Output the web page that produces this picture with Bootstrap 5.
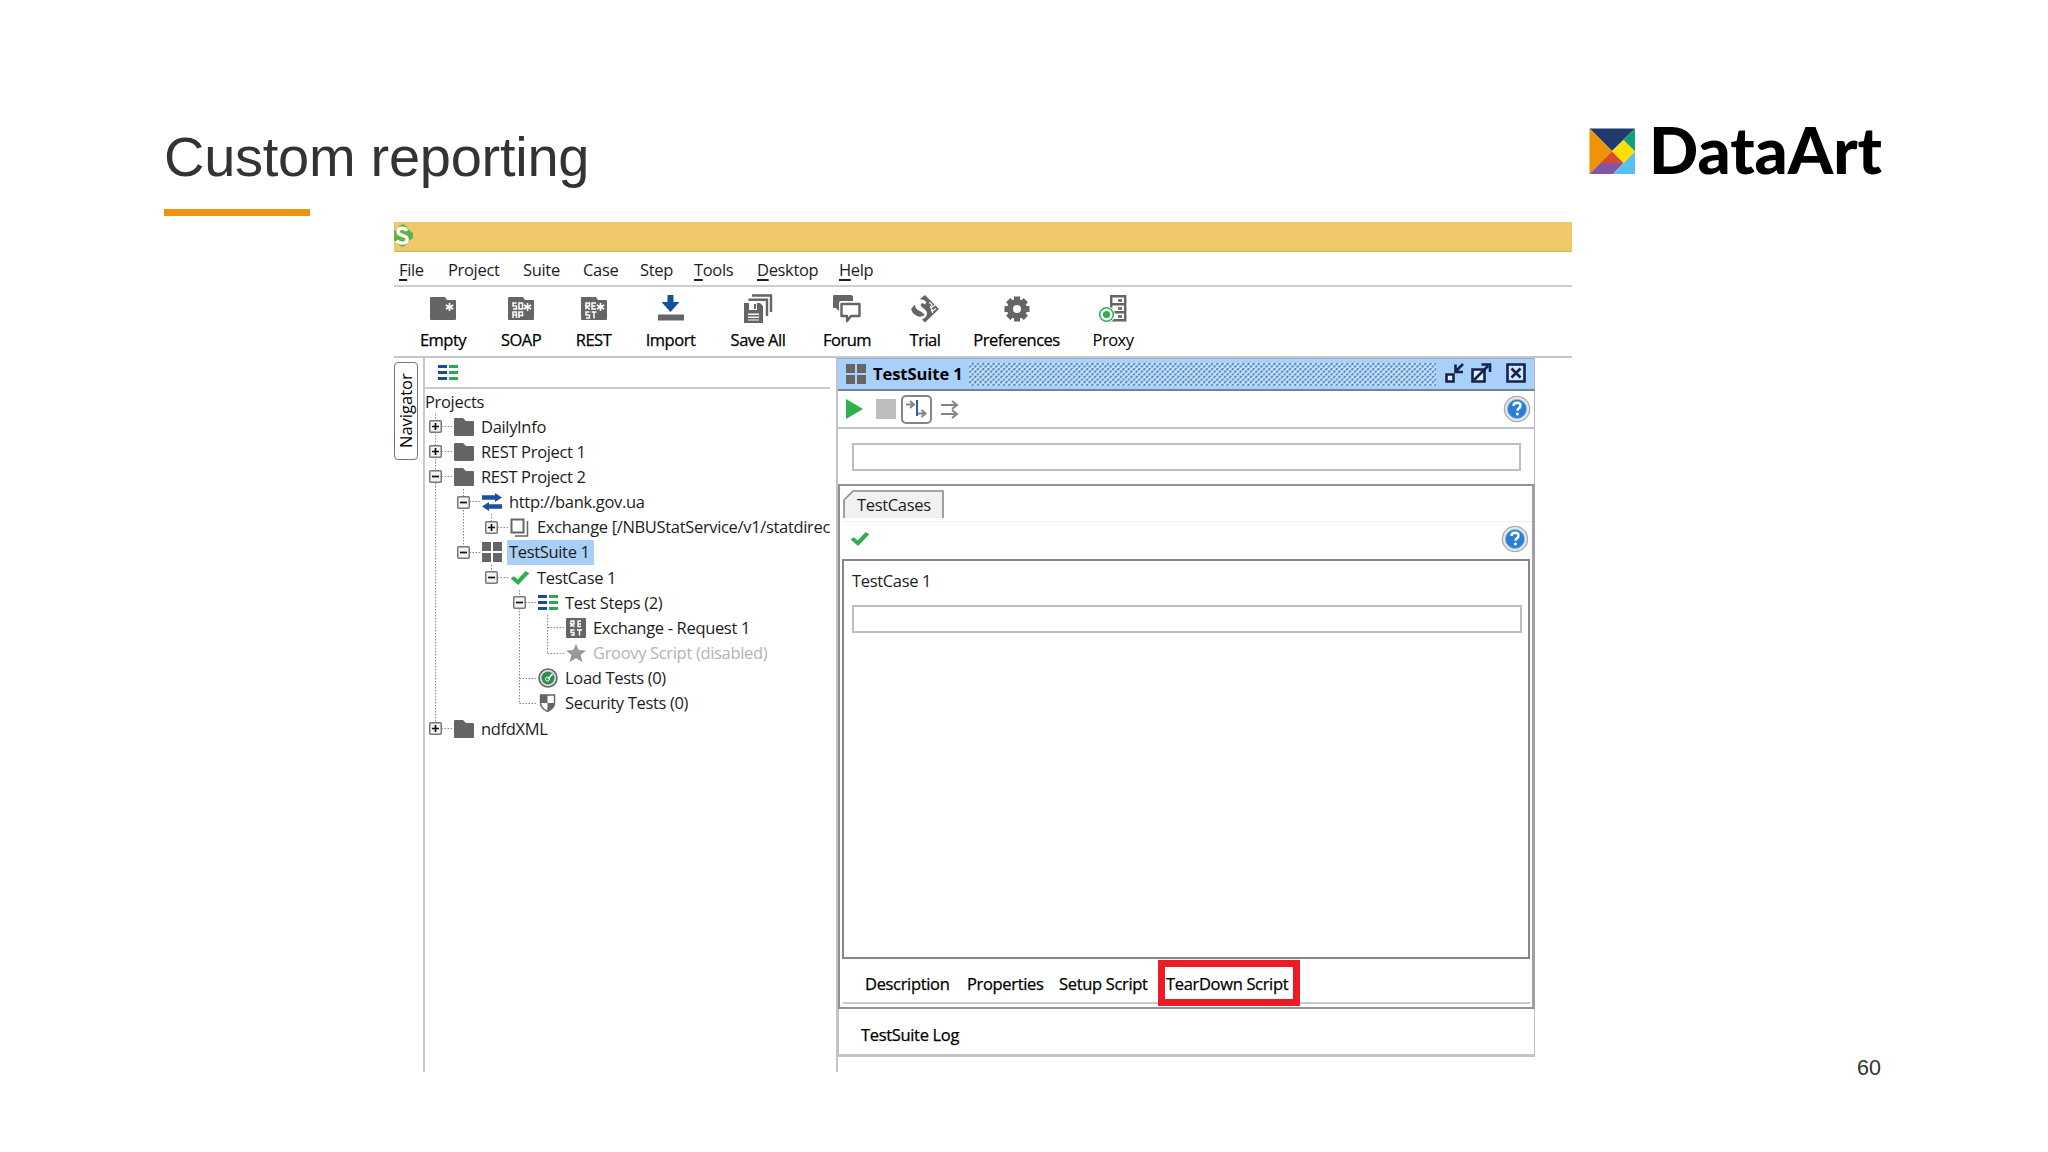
<!DOCTYPE html>
<html lang="en">
<head>
<meta charset="utf-8">
<title>Custom reporting</title>
<link href="https://cdn.jsdelivr.net/npm/bootstrap@5.3.0/dist/css/bootstrap.min.css" rel="stylesheet">
<style>
body{width:2048px;height:1152px;overflow:hidden;background:#fff;font-family:"Open Sans","Noto Sans",sans-serif;font-size:16.5px;line-height:22px;letter-spacing:-.33px;color:#1c1c22}
svg{display:block;flex:none}
.slide-head{height:222px;padding:117px 160px 0 164px}
.slide-title{font:400 56px/80px "Liberation Sans",Arial,sans-serif;letter-spacing:-.27px;color:#333;height:92px;margin:0}
.title-bar{width:146px;height:7px;background:#ee930f}
.slide-logo{margin-top:5px}
.slide-body{height:858px;padding:0 167px 0 394px}
.page-no{font:21.5px/24px "Liberation Sans",Arial,sans-serif;letter-spacing:0;color:#333}
.app{width:1178px;height:850px}
.app-caption{height:30px;background:#efc969;border-bottom:1px solid #cfb069}
.menu-strip{height:35px;border-bottom:2px solid #cfcfd1;padding-left:5px;line-height:36px}
.menu-strip u{text-underline-offset:3px;text-decoration-thickness:1.5px}
.tool-strip{height:71px;border-bottom:2px solid #c6c6c8;padding-left:10px;color:#000;letter-spacing:-.5px}
.tool-item{padding-top:7px;-webkit-text-stroke:.25px #000}
.tool-item span{margin-top:5px;white-space:nowrap}
.nav-side{width:31px;border-right:2px solid #c9c9cb;padding-top:4px}
.nav-tab{width:24px;height:98px;border:1.5px solid #77777a;border-radius:4px;writing-mode:vertical-rl;transform:rotate(180deg);line-height:21px;letter-spacing:0;text-align:center;color:#000}
.nav-panel{width:413px;height:714px;border-right:2px solid #c4c4c6}
.nav-tools{height:31px;border-bottom:2px solid #cbcbcd;margin-right:6px;padding:7px 0 0 13px}
.nav-root{height:25px;line-height:25px}
.tree-box{padding-left:1px}
.tree-row{height:25.18px;gap:7px;white-space:nowrap}
.tree-row .knob{width:13px;height:13px;margin-right:5px}
.lvl0{padding-left:3px}.lvl1{padding-left:31px}.lvl2{padding-left:59px}.lvl3{padding-left:87px}.lvl4{padding-left:115px}
.tree-sel{background:#a9cff6;height:25px;padding:1px 4px 0 2px;margin-left:-2px}
.tree-lines{left:1px;top:0;z-index:-1}
.desk{width:697px;height:698px}
.suite-caption{height:33px;background:#a9d0f8;border-bottom:2px solid #72839c;border-top:1px solid #8fb0d0;padding:0 6px 0 8px;color:#000}
.suite-caption b{margin-left:7px;letter-spacing:-.05px;font-size:16.5px}
.suite-tools{height:38px;border-bottom:2px solid #c2c2c5;padding:0 3px 0 8px}
.toggle-on{width:31px;height:29px;border:2px solid #858589;border-radius:5px;margin:0 9px 0 5px}
.frame-r{border-right:1px solid #b5b5bd}
.filter-row{height:55px;padding:14px 13px 0 14px}
.blank-field{height:28px;border:2px solid #bdbdc2}
.pane{height:525px;border:2px solid #929297;border-right-width:3px;border-right-color:#a0a0a4}
.case-tab{width:101px;height:29px;margin:4px 0 0 3px}
.case-tab span{padding:4px 0 0 14px}
.case-tools{height:38px;margin:2px 0 0 4px;padding:0 3px 3px 6px;border-top:1px solid #eee}
.case-list{height:400px;margin:0 2px 0 2px;border:2px solid #87878b;padding:9px 6px 0 8px}
.bottom-tabs{height:45px;margin:0 2px 0 3px;border-bottom:2px solid #c9c9cb;padding-left:22px;line-height:50px;color:#000;-webkit-text-stroke:.25px #000}
.hot-box{left:1158px;top:960px;width:142px;height:46px;border:7px solid #ed1b24}
.log-strip{height:48px;border:1px solid #c0c0c3;border-top:0;border-bottom:3px solid #c4c4c6;padding-left:22px;line-height:51px;color:#000;-webkit-text-stroke:.25px #000}
</style>
</head>
<body>
<svg width="0" height="0" class="position-absolute">
<defs>
<symbol id="folder" viewBox="0 0 20 18"><path d="M1 0h8l3 3h7q1 0 1 1v13q0 1-1 1H1q-1 0-1-1V1q0-1 1-1z" fill="#656466"/></symbol>
<symbol id="plus" viewBox="0 0 13 13"><rect x=".75" y=".75" width="11.5" height="11.5" rx="1" fill="#f3f3f3" stroke="#77777a" stroke-width="1.5"/><path d="M3 6.5h7M6.5 3v7" stroke="#111" stroke-width="1.7"/></symbol>
<symbol id="minus" viewBox="0 0 13 13"><rect x=".75" y=".75" width="11.5" height="11.5" rx="1" fill="#f3f3f3" stroke="#77777a" stroke-width="1.5"/><path d="M3 6.5h7" stroke="#111" stroke-width="1.7"/></symbol>
<symbol id="steps" viewBox="0 0 20 15"><path d="M0 1.500h9M0 7.500h9M0 13.500h9" stroke="#1d4c96" stroke-width="3"/><path d="M11 1.500h9M11 7.500h9M11 13.500h9" stroke="#2fa852" stroke-width="3"/></symbol>
<symbol id="grid4" viewBox="0 0 20 20"><path d="M0 0h9v9H0zM11 0h9v9h-9zM0 11h9v9H0zM11 11h9v9h-9z" fill="#656466"/></symbol>
<symbol id="tick" viewBox="0 0 20 15"><path d="M0 8l3.500-2.500 4 3.500L16 0l4 2.500L8 15z" fill="#2fae50"/></symbol>
<symbol id="help" viewBox="0 0 28 28"><circle cx="14" cy="14" r="12.600" fill="#e8e8e8" stroke="#aaa" stroke-width="1.300"/><circle cx="14" cy="14" r="9.600" fill="#2a7fd4" stroke="#8ab8e4"/><path d="M10.500 11q0-3.200 3.700-3.200 3.300 0 3.300 2.800 0 1.700-1.700 2.800-1.300.800-1.300 2.300" fill="none" stroke="#fff" stroke-width="2.500"/><circle cx="14.400" cy="19" r="1.500" fill="#fff"/></symbol>
<symbol id="filebox" viewBox="0 0 26 23"><path d="M1 0h14l2 3h8q1 0 1 1v18q0 1-1 1H1q-1 0-1-1V1q0-1 1-1z" fill="#656466"/><path d="M19.500 6v8M15.800 8l7.400 4M15.800 12l7.400-4" stroke="#fff" stroke-width="1.700"/></symbol>
</defs>
</svg>
<header class="slide-head d-flex justify-content-between align-items-start">
<div><h1 class="slide-title">Custom reporting</h1><div class="title-bar"></div></div>
<svg class="slide-logo" width="300" height="60" viewBox="1588 122 300 60">
<path d="M1589.500 128.500H1635L1612 151z" fill="#213a6d"/><path d="M1589.500 128.500l23 23-23 22.500z" fill="#f09306"/><path d="M1635 128.500v23l-11.500-11.500z" fill="#0fa37c"/><path d="M1623.500 140l11.500 11.500-11.500 11.500-11.500-11.500z" fill="#fbe000"/><path d="M1612 151.500l11.500 11.500h-23z" fill="#dc4a2e"/><path d="M1600.500 163h23l-10.500 11h-23.500z" fill="#8257a2"/><path d="M1635 151.500V174h-22z" fill="#58c0ea"/>
<text x="1649" y="174" textLength="233" lengthAdjust="spacingAndGlyphs" font-family="Lato" font-weight="900" font-size="64" letter-spacing="0">DataArt</text>
</svg>
</header>
<main class="slide-body d-flex justify-content-between align-items-end">
<section class="app align-self-start">
<div class="app-caption"><svg width="22" height="28" viewBox="0 0 22 28"><path d="M0 9q4-2 5-5l4-2 3 2q2 4 7 7v5q-5 3-7 7l-3 2-4-2q-1-3-5-5z" fill="#62b346"/><path d="M12.800 8.800Q11.500 6.300 8 6.300q-4 0-4 3.200 0 2.800 4.300 3.800 4.900 1.200 4.900 4.200 0 3.600-5 3.600Q4.500 21.100 3 18.500" fill="none" stroke="#fff" stroke-width="3.400"/></svg></div>
<nav class="menu-strip d-flex">
<div style="width:49px"><u>F</u>ile</div><div style="width:75px">Project</div><div style="width:60px">Suite</div><div style="width:57px">Case</div><div style="width:54px">Step</div><div style="width:63px"><u>T</u>ools</div><div style="width:82px"><u>D</u>esktop</div><div><u>H</u>elp</div>
</nav>
<div class="tool-strip d-flex">
<div class="tool-item d-flex flex-column align-items-center" style="width:78px"><svg width="30" height="30" viewBox="0 0 30 30"><use href="#filebox" x="2" y="3" width="26" height="23"/></svg><span>Empty</span></div>
<div class="tool-item d-flex flex-column align-items-center" style="width:78px"><svg width="30" height="30" viewBox="0 0 30 30"><use href="#filebox" x="2" y="3" width="26" height="23"/><g fill="none" stroke="#fff" stroke-width="1.500"><path d="M10.500 9H7v3h3.500v3H7M13 9h3.500v6H13zM7 24v-6h3.500v6M7 21h3.500M13 24v-6h3.500v3.500H13"/></g></svg><span>SOAP</span></div>
<div class="tool-item d-flex flex-column align-items-center" style="width:67px"><svg width="30" height="30" viewBox="0 0 30 30"><use href="#filebox" x="2" y="3" width="26" height="23"/><g fill="none" stroke="#fff" stroke-width="1.500"><path d="M7 15.500V9h3.500v3H7l3.800 3.500M17 9h-4v6h4M13 12h3.500M10.500 18H7v3h3.500v3H7M12.500 18h5M15 18v6.500"/></g></svg><span>REST</span></div>
<div class="tool-item d-flex flex-column align-items-center" style="width:87px"><svg width="30" height="30" viewBox="0 0 30 30"><path d="M11.500 1h6v7h6L14.500 18 5.500 8h6z" fill="#15509f"/><path d="M2 20.500h26v6H2z" fill="#656466"/></svg><span>Import</span></div>
<div class="tool-item d-flex flex-column align-items-center" style="width:88px"><svg width="30" height="30" viewBox="0 0 30 30"><g fill="none" stroke="#656466" stroke-width="2.400"><path d="M9 1.500h19V18M5.500 5.800H24V22"/></g><path d="M1 9h16l3 3v17H1z" fill="#656466"/><path d="M6 9h8v7H6zM5 19.500h11v7H5z" fill="#fff"/><path d="M11 10h2v5h-2zM5 21h11v1.500H5zM5 24h11v1.500H5z" fill="#656466"/></svg><span>Save All</span></div>
<div class="tool-item d-flex flex-column align-items-center" style="width:90px"><svg width="30" height="30" viewBox="0 0 30 30"><path d="M2 1h17q2 0 2 2v4H9q-2 0-2 2v8l-3-3H2q-1 0-1-1V2q0-1 1-1z" fill="#656466"/><path d="M9.500 10h18v12H19l-4 5v-5H9.500z" fill="#fff" stroke="#656466" stroke-width="2.400" stroke-linejoin="round"/></svg><span>Forum</span></div>
<div class="tool-item d-flex flex-column align-items-center" style="width:66px"><svg width="30" height="30" viewBox="0 0 30 30"><path d="M9.500 5.500L15 1l14 14-14 13.500-3-3q5-2.500 5-6 0-3-4-5.500-3-2-2-4 1-1.500 4 .500l1.500-2.500Q13 4.500 9.500 5.500z" fill="#656466"/><path d="M1 15l4-4.500q0 4.500 4.500 6.500 4 1.500 5 4.500Q9 24 5.500 21 2 19 1 15z" fill="#656466"/><path d="M19 8.500l3 2-2 3M25 11l-4 3 2 3 3-2.500M21 16l2 3" fill="none" stroke="#fff" stroke-width="1.100"/></svg><span>Trial</span></div>
<div class="tool-item d-flex flex-column align-items-center" style="width:117px"><svg width="30" height="30" viewBox="-15 -15 30 30"><g fill="#656466"><circle r="10"/><path id="cog" d="M-3-12.500h6v25h-6z"/><use href="#cog" transform="rotate(45)"/><use href="#cog" transform="rotate(90)"/><use href="#cog" transform="rotate(135)"/></g><circle r="4" fill="#fff"/></svg><span>Preferences</span></div>
<div class="tool-item d-flex flex-column align-items-center" style="width:76px;-webkit-text-stroke:0"><svg width="30" height="30" viewBox="0 0 30 30"><g fill="#fff" stroke="#656466" stroke-width="2.400"><path d="M13.200 2.200h14v8h-14zM13.200 10.200h14v8h-14zM13.200 18.200h14v8h-14z"/><path d="M20 6.500h4M20 14.500h4M20 22.500h4"/></g><circle cx="8.500" cy="20.500" r="8.500" fill="#fff"/><circle cx="8.500" cy="20.500" r="6.800" fill="#fff" stroke="#35b257" stroke-width="1.600"/><circle cx="8.500" cy="20.500" r="3.600" fill="#2fae50"/></svg><span>Proxy</span></div>
</div>
<div class="d-flex">
<div class="nav-side"><div class="nav-tab">Navigator</div></div>
<div class="nav-panel">
<div class="nav-tools"><svg width="20" height="15"><use href="#steps"/></svg></div>
<div class="nav-root">Projects</div>
<div class="tree-box position-relative z-0">
<svg class="tree-lines position-absolute" width="300" height="330" fill="none" stroke="#8a8a8e" stroke-dasharray="1.500 1.500"><path d="M9.500 0v310M37.500 75V138M65.500 100v10M65.500 151v10M93.500 176v113M121.500 201v38M9.500 12.500h18M9.500 37.500h18M9.500 62.500h18M37.500 87.500h18M65.500 113.500h18M37.500 138.500h18M65.500 163.500h18M93.500 188.500h18M121.500 213.500h18M121.500 239.500h18M93.500 264.500h18M93.500 289.500h18M9.500 314.500h18"/></svg>
<div class="tree-row lvl0 d-flex align-items-center"><svg class="knob"><use href="#plus"/></svg><svg width="20" height="18"><use href="#folder"/></svg><span>DailyInfo</span></div>
<div class="tree-row lvl0 d-flex align-items-center"><svg class="knob"><use href="#plus"/></svg><svg width="20" height="18"><use href="#folder"/></svg><span>REST Project 1</span></div>
<div class="tree-row lvl0 d-flex align-items-center"><svg class="knob"><use href="#minus"/></svg><svg width="20" height="18"><use href="#folder"/></svg><span>REST Project 2</span></div>
<div class="tree-row lvl1 d-flex align-items-center"><svg class="knob"><use href="#minus"/></svg><svg width="20" height="18" viewBox="0 0 20 18"><path d="M0 2.300h13V0l7 4.500L13 9V6.700H0zM20 11.300H7V9l-7 4.500L7 18v-2.300h13z" fill="#1d4f9f"/></svg><span>http://bank.gov.ua</span></div>
<div class="tree-row lvl2 d-flex align-items-center"><svg class="knob"><use href="#plus"/></svg><svg width="20" height="19" viewBox="0 0 20 19"><path d="M1.500 1.500h12v13h-12z" fill="#fff" stroke="#656466" stroke-width="2"/><path d="M17.500 3v15H5" fill="none" stroke="#656466" stroke-width="1.500"/></svg><span>Exchange [/NBUStatService/v1/statdirec</span></div>
<div class="tree-row lvl1 d-flex align-items-center"><svg class="knob"><use href="#minus"/></svg><svg width="20" height="20"><use href="#grid4"/></svg><span class="tree-sel">TestSuite 1</span></div>
<div class="tree-row lvl2 d-flex align-items-center"><svg class="knob"><use href="#minus"/></svg><svg width="20" height="14"><use href="#tick"/></svg><span>TestCase 1</span></div>
<div class="tree-row lvl3 d-flex align-items-center"><svg class="knob"><use href="#minus"/></svg><svg width="20" height="15"><use href="#steps"/></svg><span>Test Steps (2)</span></div>
<div class="tree-row lvl4 d-flex align-items-center"><svg class="knob"></svg><svg width="20" height="20" viewBox="0 0 20 20"><rect width="20" height="20" rx="1" fill="#656466"/><path d="M5 9V3h3v3H5l3.500 3M15 3h-3v5.500h3M12 6h3M8.500 12H5v2.500h3V17H5M11 12h5M13.500 12v5.500" fill="none" stroke="#fff" stroke-width="1.400"/></svg><span>Exchange - Request 1</span></div>
<div class="tree-row lvl4 d-flex align-items-center"><svg class="knob"></svg><svg width="20" height="18" viewBox="0 0 20 18"><path d="M10 0l2.700 6 7.300.500-5.500 4.500 2 7L10 14.200 3.500 18l2-7L0 6.500 7.300 6z" fill="#98989b"/></svg><span style="color:#b4b4b6">Groovy Script (disabled)</span></div>
<div class="tree-row lvl3 d-flex align-items-center"><svg class="knob"></svg><svg width="20" height="20" viewBox="0 0 20 20"><circle cx="10" cy="10" r="9" fill="#ddd" stroke="#656466" stroke-width="1.600"/><circle cx="10" cy="10" r="6.500" fill="#2c8f50"/><path d="M10 11l4.500-5" stroke="#fff" stroke-width="1.800"/><circle cx="9.500" cy="11" r="2" fill="none" stroke="#fff"/></svg><span>Load Tests (0)</span></div>
<div class="tree-row lvl3 d-flex align-items-center"><svg class="knob"></svg><svg width="20" height="18" viewBox="0 0 20 18"><path d="M2.500 1h14v8q0 5-7 8.500-7-3.500-7-8.500z" fill="#fff" stroke="#656466" stroke-width="1.400"/><path d="M2 1h7.500v8H2zM9.500 9h7q0 5-7 8.500z" fill="#656466"/></svg><span>Security Tests (0)</span></div>
<div class="tree-row lvl0 d-flex align-items-center"><svg class="knob"><use href="#plus"/></svg><svg width="20" height="18"><use href="#folder"/></svg><span>ndfdXML</span></div>
</div>
</div>
<div class="desk">
<div class="suite-caption frame-r d-flex align-items-center"><svg width="20" height="20"><use href="#grid4"/></svg><b>TestSuite 1</b>
<svg class="ms-auto" width="467" height="23"><defs><pattern id="hatch" width="5.200" height="5.200" patternUnits="userSpaceOnUse"><path d="M.400 4.200L2 2.600M3 1.600L4.600 0" stroke="#3f72a4" stroke-width="1.300"/><path d="M3 4.800l1.600-1.600M.400 1.600L2 0" stroke="#dff0ff" stroke-width="1.200"/></pattern></defs><rect width="467" height="23" fill="url(#hatch)"/></svg>
<svg width="86" height="24" viewBox="0 0 86 24" style="margin-left:6px" fill="none" stroke="#152348" stroke-width="2.600"><path d="M4.500 12.500h7v7h-7z" fill="#dff0ff"/><path d="M21 2l-7 7M13.500 2.500V10H21"/><path d="M30.500 7.500h12v12h-12z" fill="#dff0ff"/><path d="M32 18L46 4M39.500 2.500H48V10"/><path d="M65.500 2.500h17v17h-17z" fill="#cfe6fc"/><path d="M69.500 6.500l9 9M78.500 6.500l-9 9"/></svg></div>
<div class="suite-tools frame-r d-flex align-items-center"><svg width="17" height="20"><path d="M0 0l17 10L0 20z" fill="#2bb24c"/></svg><svg width="20" height="20" style="margin-left:13px"><rect width="20" height="20" fill="#bdbcbe"/></svg>
<div class="toggle-on d-flex align-items-center justify-content-center"><svg width="22" height="18" viewBox="0 0 22 18" fill="none" stroke="#858589" stroke-width="2"><path d="M0 4.500h8M4 1l4 3.500L4 8M11 13.500h8M15.500 10l4 3.500-4 3.500"/><path d="M11 0v16" stroke="#2b5db0"/></svg></div>
<svg width="18" height="19" viewBox="0 0 18 19" fill="none" stroke="#858589" stroke-width="2"><path d="M0 5h15M11 1l5 4-5 4M0 14h15M11 10l5 4-5 4"/></svg>
<svg class="ms-auto" width="28" height="28"><use href="#help"/></svg></div>
<div class="filter-row frame-r"><div class="blank-field"></div></div>
<div class="pane">
<div class="case-tab position-relative"><svg class="position-absolute" width="101" height="29" viewBox="0 0 101 29"><path d="M1 28V10l9-9h90v27" fill="#f1f1f2" stroke="#8a8a8e" stroke-width="1.600"/></svg><span class="position-relative d-block">TestCases</span></div>
<div class="case-tools d-flex align-items-center justify-content-between"><svg width="20" height="14"><use href="#tick"/></svg><svg width="28" height="28"><use href="#help"/></svg></div>
<div class="case-list"><div>TestCase 1</div><div class="blank-field" style="margin-top:13px"></div></div>
<div class="bottom-tabs d-flex"><div style="width:102px">Description</div><div style="width:92px">Properties</div><div style="width:107px">Setup Script</div><div>TearDown Script</div></div>
</div>
<div class="log-strip">TestSuite Log</div>
</div>
</div>
</section>
<div class="page-no">60</div>
</main>
<div class="hot-box position-absolute"></div>
<script src="https://cdn.jsdelivr.net/npm/bootstrap@5.3.0/dist/js/bootstrap.bundle.min.js"></script>
</body>
</html>
